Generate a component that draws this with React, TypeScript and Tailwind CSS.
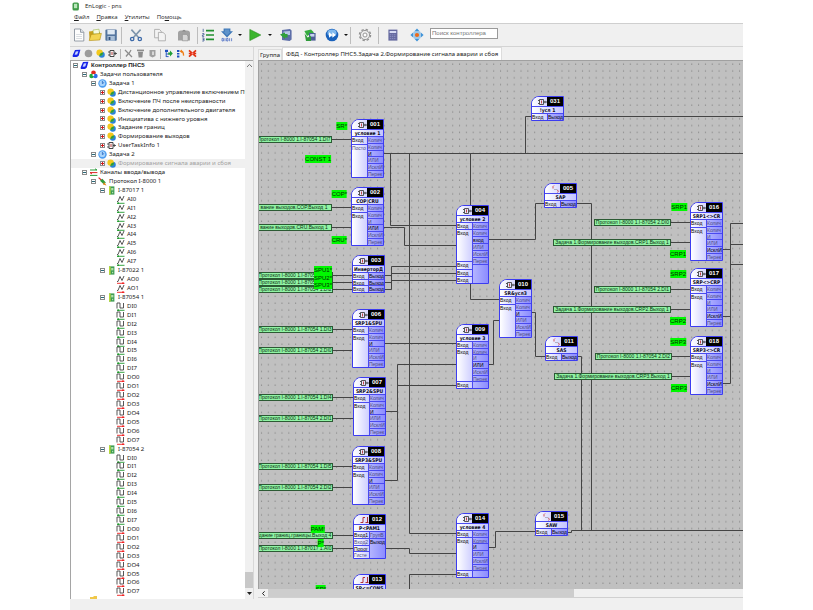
import React, { useState } from "react";

/* ---------- icons ---------- */

type IconName =
  | "controller" | "balls" | "task" | "fbd" | "block" | "channels" | "protocol"
  | "module" | "ai" | "ao" | "di" | "do" | "folder"
  | "grayBall" | "pen" | "trash" | "stack" | "treeAdd" | "treeSort" | "remove";

const zig = "M1 6.5 L2 6.5 L4 1.5 L6 5.5 L8 1";
const square = "M1 6.5 V1 H4 V6 H7.5 V1";

function Icon({ name }: { name: IconName }) {
  const wave = (d: string, color: string, dot: number) => (
    <g fill="none">
      <path d={d} stroke="#444" strokeWidth="0.9" />
      <path d="M1 8.3 H8.5" stroke={color} strokeWidth="0.9" />
      <circle cx={dot} cy="8.2" r="0.9" fill={color} />
    </g>
  );
  return (
    <svg viewBox="0 0 9 9" className="size-[9px] shrink-0" aria-hidden="true">
      {name === "controller" && (
        <g>
          <path d="M3 1 L8.4 0.8 L6.8 6.6 Q6 8 4.5 8 H1 Q0.3 7.5 0.8 6Z" fill="#1724e8" />
          <path d="M3.8 2.4 L6.4 2.3 L5.2 5.6 L2.6 5.8Z" fill="#c9d4ff" />
        </g>
      )}
      {name === "balls" && (
        <g>
          <circle cx="4.5" cy="2.8" r="2.3" fill="#e22a1d" />
          <circle cx="2.6" cy="6" r="2.3" fill="#20a83a" />
          <circle cx="6.4" cy="6" r="2.3" fill="#2b6ee6" />
          <circle cx="4.4" cy="4.9" r="1" fill="#fff" />
        </g>
      )}
      {name === "task" && (
        <g>
          <circle cx="4.5" cy="4.5" r="4.2" fill="#4d9df0" />
          <circle cx="4.3" cy="4.2" r="2.9" fill="#a9d4fb" />
          <path d="M4.4 2 V4.6 L6.2 3.4" stroke="#2464c0" strokeWidth="0.8" fill="none" />
        </g>
      )}
      {name === "fbd" && (
        <g>
          <circle cx="5.8" cy="5.8" r="3" fill="#2b83d8" />
          <circle cx="3.6" cy="3.6" r="3.2" fill="#f3c81d" />
          <path d="M3.4 7 Q3.5 3.6 7 3.4 Q7.4 6.8 3.4 7Z" fill="#2e9e3a" />
        </g>
      )}
      {name === "grayBall" && <circle cx="4.5" cy="4.5" r="3.8" fill="#9b9b9b" />}
      {name === "block" && (
        <g>
          <path d="M2 1.5 H6 V7.5 H2Z" fill="#fff" stroke="#333" strokeWidth="0.9" />
          <path d="M0 3 H2 M0 6 H2 M6 4.5 H9 M7.2 3 V6" stroke="#333" strokeWidth="0.8" />
          <path d="M4 2.8 V6" stroke="#a22" strokeWidth="0.9" fill="none" />
        </g>
      )}
      {name === "channels" && (
        <g fill="none" strokeWidth="1">
          <path d="M1 2 H8" stroke="#2a9a3a" />
          <path d="M1 4.6 H8.4" stroke="#d22" />
          <path d="M1 7.4 H8.4" stroke="#2a9a3a" />
          <path d="M6 0.8 L8 2" stroke="#2a9a3a" />
          <path d="M1 4.6 L3 6" stroke="#d22" />
        </g>
      )}
      {name === "protocol" && (
        <g>
          <path d="M0.6 0.6 L3.6 3.2" stroke="#d22" strokeWidth="1.2" />
          <path d="M2 3.8 L4.4 1.8 L7.8 5.6 L6 7.6Z" fill="#2c9c3c" />
          <path d="M6 5 L8.6 8.4 L5 7.4Z" fill="#e7881c" />
        </g>
      )}
      {name === "module" && (
        <g>
          <rect x="2" y="0.4" width="5.4" height="8.2" fill="#3f9d55" />
          <rect x="2" y="0.4" width="1.6" height="8.2" fill="#b8d83a" />
          <rect x="4.2" y="2" width="2.2" height="2.4" fill="#b5e2ac" />
          <rect x="5" y="5.8" width="1.2" height="1.4" fill="#b5e2ac" />
        </g>
      )}
      {name === "ai" && wave(zig, "#1f9a2c", 2.2)}
      {name === "ao" && wave(zig, "#f01818", 7)}
      {name === "di" && wave(square, "#1f9a2c", 2.2)}
      {name === "do" && wave(square, "#f01818", 7)}
      {name === "folder" && <path d="M1 1 H4 L5 0 H8 V8 H1Z" fill="#f0c84a" />}
      {name === "pen" && (
        <path d="M1 1 L8 8 M7 1 L5 4.5 M2 7.5 L4 5" stroke="#8c8c8c" strokeWidth="1.3" fill="none" />
      )}
      {name === "trash" && (
        <g fill="#8d8d8d">
          <rect x="1" y="0.6" width="7" height="1.6" />
          <path d="M2 2.8 H7 L6.4 8.6 H2.6Z" />
        </g>
      )}
      {name === "stack" && (
        <g>
          <path d="M1.5 1 H7.5 V7 L4.5 8.4 L1.5 7Z" fill="#a0a0a0" />
          <path d="M4 2.6 H6 V6 H4Z" fill="#d8d8d8" />
        </g>
      )}
      {name === "treeAdd" && (
        <g>
          <path d="M1 0.8 H4 V3 H1Z" fill="#1c4fc0" />
          <path d="M2.2 3 V8 M2.2 5 H4.6 M2.2 7.6 H4.6" stroke="#1c4fc0" strokeWidth="0.9" />
          <path d="M4.2 3.6 H6 V1.6 L8.8 4.6 L6 7.6 V5.8 H4.2Z" fill="#1e9d36" />
        </g>
      )}
      {name === "treeSort" && (
        <g>
          <path d="M1 1 H3.4 V3 H1Z M1 4 H3.4 V5.6 H1Z M1 6.6 H3.4 V8.4 H1Z" fill="#1c4fc0" />
          <path d="M4.4 2.2 Q7.4 1.6 7.6 6.6" stroke="#ef7d14" strokeWidth="1.3" fill="none" />
          <path d="M6 0.4 L3.8 2.4 L6.2 4.2Z" fill="#ef7d14" />
        </g>
      )}
      {name === "remove" && (
        <g>
          <path d="M1 1.4 L8 7.6 M8 1.4 L1 7.6 M0.8 4.5 H8.2" stroke="#e0300f" strokeWidth="1.7" />
          <circle cx="4.5" cy="4.5" r="1" fill="#f88" />
        </g>
      )}
    </svg>
  );
}

type ToolName =
  | "new" | "open" | "save" | "cut" | "copy" | "paste" | "list" | "compile"
  | "play" | "load" | "sync" | "forward" | "gear" | "calc" | "locate";

function ToolIcon({ name }: { name: ToolName }) {
  return (
    <svg viewBox="0 0 14 14" className="size-[14px]" aria-hidden="true">
      {name === "new" && (
        <g>
          <path d="M2.5 1 H8.5 L11.8 4.3 V13 H2.5Z" fill="#fdfdfd" stroke="#7d8894" strokeWidth="0.8" />
          <path d="M8.5 1 V4.3 H11.8" fill="#dfe4ea" stroke="#7d8894" strokeWidth="0.8" />
          <path d="M4.2 6.5 H10 M4.2 8.5 H10 M4.2 10.5 H10" stroke="#c9ced4" strokeWidth="0.7" />
        </g>
      )}
      {name === "open" && (
        <g>
          <path d="M1 3.5 L5 3 L6.4 4.6 L12 3.8 V12 H1.6Z" fill="#c8a11d" />
          <path d="M5 2 L11 1.2 L11.6 6 H5.4Z" fill="#f7fbe0" stroke="#8fae37" strokeWidth="0.5" />
          <path d="M3.2 6.4 L13.4 5.4 L11.8 12 L1.2 12.6Z" fill="#f3d552" stroke="#b48e12" strokeWidth="0.6" />
        </g>
      )}
      {name === "save" && (
        <g>
          <rect x="1.4" y="1.4" width="11.4" height="11.4" rx="1" fill="#54759f" />
          <rect x="3.4" y="2" width="7.4" height="4.4" fill="#dfe9f4" />
          <rect x="3.4" y="8" width="7.4" height="4.8" fill="#a9bfd8" />
          <rect x="4.6" y="9" width="1.8" height="3" fill="#33507a" />
        </g>
      )}
      {name === "cut" && (
        <g fill="none">
          <path d="M2.4 1.6 L10 10 M11.6 1.6 L4 10" stroke="#7d94ab" strokeWidth="1.6" />
          <circle cx="3.2" cy="11" r="1.7" stroke="#3c69a8" strokeWidth="1.3" />
          <circle cx="10.8" cy="11" r="1.7" stroke="#3c69a8" strokeWidth="1.3" />
        </g>
      )}
      {name === "copy" && (
        <g fill="#f3f3f3" stroke="#a3a3a3" strokeWidth="0.8">
          <path d="M1.6 1.4 H6.4 L8.2 3.2 V9.8 H1.6Z" />
          <path d="M5.4 4.4 H10 L12.4 6.6 V12.8 H5.4Z" />
        </g>
      )}
      {name === "paste" && (
        <g>
          <path d="M1 5 Q1 2.4 4 2.4 H10 Q13 2.4 13 5 V12.4 H1Z" fill="#a2a2a2" />
          <path d="M5 3.4 Q7 0.2 9 3.4Z" fill="#8a8a8a" />
          <path d="M5.4 6.4 H9.4 L11 8 V12.8 H5.4Z" fill="#d6d6d6" stroke="#8c8c8c" strokeWidth="0.6" />
        </g>
      )}
      {name === "list" && (
        <g fill="none">
          <path d="M5 2.6 H13 M5 7 H13 M5 11.4 H13" stroke="#21902e" strokeWidth="1.6" />
          <path d="M2.2 0.8 V4 M1.2 5.6 H3 V7 H1.4 V8.4 H3.2 M1.2 10 H3 V13 H1.2 M1.6 11.5 H3" stroke="#2d4a8a" strokeWidth="0.7" />
        </g>
      )}
      {name === "compile" && (
        <g>
          <path d="M3.6 0.4 H10.4 V3.2 H13 L7 9.4 L1 3.2 H3.6Z" fill="#3f78b8" />
          <path d="M4.8 1.4 H9.2 V3.8 H10.6 L7 7.4 L3.4 3.8 H4.8Z" fill="#5f93ca" />
          <path d="M2 10.4 H3.4 V13 H2Z M5 10.2 V13.2 M6.6 10.4 H8 V13 H6.6Z M9.6 10.2 V13.2 M11.6 10.2 V13.2" fill="none" stroke="#3a5fc0" strokeWidth="0.7" />
        </g>
      )}
      {name === "play" && <path d="M1.8 1.4 L12.8 7 L1.8 12.6Z" fill="#3cb52e" stroke="#2a8a20" strokeWidth="0.6" />}
      {name === "load" && (
        <g>
          <path d="M3 2 L11 1 L12.6 2.4 V11.4 L10.6 13 L3 12Z" fill="#5d6ea8" />
          <path d="M4.6 3.4 L11 3 V7 H4.6Z" fill="#b6c6e6" />
          <path d="M1 6.4 L6 4.6 V6 H8.6 V9.4 H6 V11Z" fill="#2fa03a" />
        </g>
      )}
      {name === "sync" && (
        <g>
          <path d="M1.4 3 L8 1.6 L11 4.6 L4 8Z" fill="#35ab3f" />
          <rect x="6" y="5" width="6.6" height="7.6" fill="#4d5f96" />
          <rect x="7.2" y="6" width="4.2" height="2.6" fill="#c6d4ee" />
          <path d="M1.6 5.4 L4.6 9.6 L8 8 V13 H3Z" fill="#2f9a3a" />
        </g>
      )}
      {name === "forward" && (
        <g>
          <circle cx="7" cy="7" r="6.3" fill="#1a62bc" />
          <ellipse cx="7" cy="5" rx="4.6" ry="3.4" fill="#7fb8ee" />
          <path d="M4 4.2 L7.4 7 L4 9.8Z M7.4 4.2 L10.8 7 L7.4 9.8Z" fill="#fff" />
        </g>
      )}
      {name === "gear" && (
        <g fill="none" stroke="#8f8f8f">
          <circle cx="7" cy="7" r="5.6" strokeWidth="1.3" strokeDasharray="2.4 2" />
          <circle cx="7" cy="7" r="4.6" strokeWidth="0.9" fill="#ececec" />
          <circle cx="7" cy="7" r="2" strokeWidth="0.9" fill="#fff" />
        </g>
      )}
      {name === "calc" && (
        <g>
          <rect x="2.4" y="1.6" width="9" height="11" fill="#666aa0" />
          <rect x="3.6" y="3" width="6.6" height="2" fill="#d7dbf3" />
          <path d="M3.8 6.8 H10.2 M3.8 8.6 H10.2 M3.8 10.6 H10.2" stroke="#8f93c4" strokeWidth="0.9" strokeDasharray="1.4 0.7" />
        </g>
      )}
      {name === "locate" && (
        <g>
          <path d="M7 0.4 L9.8 3.4 H4.2Z M7 13.6 L9.8 10.6 H4.2Z M0.4 7 L3.4 4.2 V9.8Z M13.6 7 L10.6 4.2 V9.8Z" fill="#3f93d8" />
          <rect x="3.6" y="3.6" width="6.8" height="6.8" fill="#9dc9ea" />
          <circle cx="7" cy="7" r="2.1" fill="#ee6a18" />
        </g>
      )}
    </svg>
  );
}

/* ---------- tool bars ---------- */

function ToolButton({ name, label, width }: { name: ToolName; label: string; width: string }) {
  return (
    <button type="button" aria-label={label} className={`flex shrink-0 items-center justify-center ${width}`}>
      <ToolIcon name={name} />
    </button>
  );
}

function Caret({ label }: { label: string }) {
  return (
    <button type="button" aria-label={label} className="flex w-2 shrink-0 items-center justify-center">
      <svg viewBox="0 0 4 2" className="h-[2px] w-1" aria-hidden="true">
        <path d="M0 0 H4 L2 2Z" fill="#111" />
      </svg>
    </button>
  );
}

function Separator() {
  return <span className="h-[17px] w-px shrink-0 bg-[#bdbdbd]" />;
}

function MainToolbar() {
  return (
    <div className="flex h-6 shrink-0 items-center border-t border-b border-t-[#cfcfcf] border-b-[#d4d4d4] bg-[#f0f0f0] pl-px">
      <ToolButton name="new" label="Создать" width="w-4" />
      <ToolButton name="open" label="Открыть" width="w-4" />
      <ToolButton name="save" label="Сохранить" width="w-4" />
      <span className="w-[2px]" />
      <Separator />
      <ToolButton name="cut" label="Вырезать" width="w-[27px]" />
      <ToolButton name="copy" label="Копировать" width="w-[22px]" />
      <ToolButton name="paste" label="Вставить" width="w-[26px]" />
      <Separator />
      <ToolButton name="list" label="Порядок" width="w-5" />
      <ToolButton name="compile" label="Компиляция" width="w-[18px]" />
      <Caret label="Варианты компиляции" />
      <ToolButton name="play" label="Пуск" width="w-[22px]" />
      <Caret label="Варианты пуска" />
      <ToolButton name="load" label="Загрузить" width="w-6" />
      <ToolButton name="sync" label="Обновить" width="w-6" />
      <ToolButton name="forward" label="Вперёд" width="w-5" />
      <Caret label="Варианты" />
      <Separator />
      <ToolButton name="gear" label="Настройки" width="w-[27px]" />
      <Separator />
      <ToolButton name="calc" label="Калькулятор" width="w-[27px]" />
      <ToolButton name="locate" label="Найти" width="w-[22px]" />
      <input
        type="text"
        aria-label="Поиск контроллера"
        placeholder="Поиск контроллера"
        className="mb-1 ml-[2px] h-[11px] w-[68px] rounded-none border border-[#9a9a9a] bg-white px-px text-[6px] leading-[9px] text-[#222] outline-none placeholder:text-[#777]"
      />
    </div>
  );
}

const sideTools: { icon: IconName; label: string }[][] = [
  [
    { icon: "controller", label: "Контроллер" },
    { icon: "grayBall", label: "Задача" },
    { icon: "fbd", label: "ФБД" },
    { icon: "block", label: "Блок" },
  ],
  [
    { icon: "pen", label: "Изменить" },
    { icon: "trash", label: "Удалить" },
    { icon: "stack", label: "Архив" },
  ],
  [
    { icon: "treeAdd", label: "Развернуть" },
    { icon: "treeSort", label: "Упорядочить" },
    { icon: "remove", label: "Убрать" },
  ],
];

function SideToolbar() {
  return (
    <div className="flex h-[13px] shrink-0 items-center gap-[2px]">
      {sideTools.map((group, i) => (
        <div key={i} className="flex items-center">
          {i > 0 && <span className="mr-px h-[10px] w-px bg-[#b5b5b5]" />}
          {group.map((tool) => (
            <button key={tool.label} type="button" aria-label={tool.label} className="flex w-3 justify-center">
              <Icon name={tool.icon} />
            </button>
          ))}
        </div>
      ))}
    </div>
  );
}

/* ---------- project tree ---------- */

type Row = { level: number; icon: IconName; text: string; box?: "+" | "-"; bold?: boolean; selected?: boolean };

const series = (prefix: string, count: number, icon: IconName): Row[] =>
  Array.from({ length: count }, (_, i) => ({ level: 4, icon, text: prefix + i }));

const rows: Row[] = [
  { level: 0, icon: "controller", text: "Контроллер ПНС5", box: "-", bold: true },
  { level: 1, icon: "balls", text: "Задачи пользователя", box: "-" },
  { level: 2, icon: "task", text: "Задача 1", box: "-" },
  { level: 3, icon: "fbd", text: "Дистанционное управление включением ПЧ", box: "+" },
  { level: 3, icon: "fbd", text: "Включение ПЧ после неисправности", box: "+" },
  { level: 3, icon: "fbd", text: "Включение дополнительного двигателя", box: "+" },
  { level: 3, icon: "fbd", text: "Инициатива с нижнего уровня", box: "+" },
  { level: 3, icon: "fbd", text: "Задание границ", box: "+" },
  { level: 3, icon: "fbd", text: "Формирование выходов", box: "+" },
  { level: 3, icon: "block", text: "UserTaskInfo 1", box: "+" },
  { level: 2, icon: "task", text: "Задача 2", box: "-" },
  { level: 3, icon: "fbd", text: "Формирование сигнала аварии и сбоя", box: "+", selected: true },
  { level: 1, icon: "channels", text: "Каналы ввода/вывода", box: "-" },
  { level: 2, icon: "protocol", text: "Протокол I-8000 1", box: "-" },
  { level: 3, icon: "module", text: "I-87017 1", box: "-" },
  ...series("AI", 8, "ai"),
  { level: 3, icon: "module", text: "I-87022 1", box: "-" },
  ...series("AO", 2, "ao"),
  { level: 3, icon: "module", text: "I-87054 1", box: "-" },
  ...series("DI", 8, "di"),
  ...series("DO", 8, "do"),
  { level: 3, icon: "module", text: "I-87054 2", box: "-" },
  ...series("DI", 8, "di"),
  ...series("DO", 8, "do"),
];

const indent = ["pl-0", "pl-[9px]", "pl-[18px]", "pl-[27px]", "pl-9"];

function Expander({ kind }: { kind?: "+" | "-" }) {
  return (
    <span className="flex w-[9px] shrink-0 items-center justify-center">
      {kind && (
        <svg viewBox="0 0 5 5" className="size-[5px]" aria-hidden="true">
          <rect x="0.5" y="0.5" width="4" height="4" fill="#fff" stroke="#8b8b8b" strokeWidth="1" />
          <path d="M1 2.5 H4" stroke={kind === "+" ? "#d21c1c" : "#2a6a7a"} strokeWidth="1" />
          {kind === "+" && <path d="M2.5 1 V4" stroke="#d21c1c" strokeWidth="1" />}
        </svg>
      )}
    </span>
  );
}

function Tree() {
  return (
    <div className="flex min-h-0 flex-1 border-t border-l border-[#a5a5a5] bg-white">
      <ul className="flex min-w-0 flex-1 flex-col overflow-hidden">
        {rows.map((row, i) => (
          <li
            key={i}
            className={`flex min-h-0 flex-1 items-center ${indent[row.level]} ${row.selected ? "bg-[#f0f0f0] text-[#a2a2a2]" : "text-[#1c1c1c]"}`}
          >
            <Expander kind={row.box} />
            <Icon name={row.icon} />
            <span
              className={`ml-[2px] whitespace-nowrap ${row.bold ? "font-['Liberation_Sans',Arial,sans-serif] font-bold" : "font-['Noto_Sans',sans-serif]"}`}
            >
              {row.text}
            </span>
          </li>
        ))}
        <li className="flex h-[3px] shrink-0 items-start overflow-hidden pl-[18px]">
          <Icon name="folder" />
        </li>
      </ul>
      <div className="flex w-2 shrink-0 flex-col items-center bg-[#f0f0f0]">
        <svg viewBox="0 0 5 3" className="mt-[3px] h-[3px] w-[5px]" aria-hidden="true">
          <path d="M0 3 L2.5 0.4 L5 3" fill="none" stroke="#777" />
        </svg>
        <span className="flex-1" />
        <span className="h-4 w-full bg-[#c8c8c8]" />
        <svg viewBox="0 0 5 3" className="my-1 h-[3px] w-[5px]" aria-hidden="true">
          <path d="M0 0 H5 L2.5 3Z" fill="#222" />
        </svg>
      </div>
    </div>
  );
}

/* ---------- diagram ---------- */

// Sheet coordinate shown at the top left corner of the view.
const VIEW = { x: 259, y: 61 };

type Kind = "logic" | "compare" | "delay";
type Cell = { text: string; span?: number; dim?: boolean };
type Block = { id: string; title: string; x: number; y: number; h: number; kind: Kind; left: Cell[]; right: Cell[] };

const ops = ["Колич", "Колич", "И", "ИЛИ", "ИсклИ", "Перек"];
const logicRight = (active: number, extra = 0, label?: string): Cell[] => [
  ...ops.map((text, i) => ({ text: i === active && label ? label : text, dim: i !== active })),
  ...(extra ? [{ text: "", span: extra }] : []),
];
const logicLeft = (extra = 0): Cell[] => [
  { text: "Вход" },
  { text: "Вход", span: 5 },
  ...Array.from({ length: extra }, () => ({ text: "Вход" })),
];
const logic = (id: string, title: string, x: number, y: number, active: number, extra = 0, label?: string): Block => ({
  id, title, x, y, h: [59, 65, 72, 79][extra], kind: "logic",
  left: logicLeft(extra), right: logicRight(active, extra, label),
});
const single = (id: string, title: string, x: number, y: number, kind: Kind): Block => ({
  id, title, x, y, h: 25, kind, left: [{ text: "Вход" }], right: [{ text: "Выход" }],
});

const blocks: Block[] = [
  { ...logic("001", "условие 1", 351, 119, 2), left: [{ text: "Вход" }, { text: "Посто", span: 5, dim: true }] },
  logic("002", "COP|CRU", 351, 187, 3),
  {
    id: "003", title: "ИнверторД", x: 352, y: 255, h: 38, kind: "logic",
    left: [{ text: "Вход" }, { text: "Вход" }, { text: "Вход" }],
    right: [{ text: "Выход" }, { text: "Выход" }, { text: "Выход" }],
  },
  logic("006", "SRP1&SPU", 352, 309, 2),
  logic("007", "SRP2&SPU", 353, 377, 2),
  logic("008", "SRP3&SPU", 352, 446, 2),
  {
    id: "012", title: "P<PAM1", x: 353, y: 514, h: 45, kind: "compare",
    left: [{ text: "Вход1" }, { text: "Вход2", dim: true }, { text: "Порог" }, { text: "Гисте", dim: true }],
    right: [{ text: "ГрупВ", dim: true }, { text: "Выход", span: 3 }],
  },
  single("013", "SP<=CONS", 353, 574, "compare"),
  single("031", "!усл 1", 531, 96, "logic"),
  logic("004", "условие 2", 456, 205, 2, 3, "вход"),
  single("005", "SAP", 544, 183, "delay"),
  logic("009", "условие 3", 456, 324, 3, 1),
  logic("010", "SR&усл3", 499, 279, 2),
  single("011", "SAS", 545, 336, "delay"),
  logic("014", "условие 4", 456, 513, 2, 1),
  single("015", "SAW", 535, 511, "delay"),
  logic("016", "SRP1<>CR", 690, 202, 4),
  logic("017", "SRP<>CRP", 690, 268, 4),
  logic("018", "SRP3<>CR", 690, 336, 4),
];

const wires = [
  "M383 153.5 H743", "M390.5 153 V225.5 H456", "M409.5 153 V533.5 H456",
  "M383 227.5 H404.5 V245.5 H456",
  "M385 275.5 H391.5 M385 282.5 H391.5 M385 289.5 H391.5 V266.5 H456 M391 273.5 H456 M391 280.5 H456",
  "M385 343.5 H456", "M385 411.5 H397.5 M385 480.5 H397.5 V364.5 H456 M397 385.5 H456",
  "M385 548.5 H409.5 V553.5 H456", "M409.5 590 V574.5 H456",
  "M470.5 153 V205 M470.5 284 V299.5 H499",
  "M488 239.5 H535.5 V203.5 H544", "M525.5 153 V116.5 H531 M563 116.5 H743",
  "M576 203.5 H591.5 V531", "M488 364.5 H493.5 V320.5 H499",
  "M531 312.5 H535.5 V356.5 H545", "M578 356.5 H581.5 V531",
  "M488 547.5 H495.5 V531.5 H535", "M568 532.5 H571.5 V530.5 H743",
  "M722 249.5 H730.5 M722 316.5 H730.5 M722 383.5 H730.5 V223.5 H743 M730 244.5 H743 M730 264.5 H743",
  "M332 139.5 H351 M332 207.5 H351 M332 227.5 H351",
  "M332 275.5 H352 M332 282.5 H352 M332 289.5 H352",
  "M332 329.5 H353 M332 350.5 H353 M332 397.5 H353 M332 418.5 H353",
  "M332 466.5 H353 M332 487.5 H353 M332 535.5 H353 M332 548.5 H353",
  "M670 222.5 H690 M670 242.5 H690 M670 289.5 H690 M670 309.5 H690 M671 356.5 H690 M671 376.5 H690",
];

const proto = "Протокол I-8000 1.";
const form = "Задача 1.Формирование выходов.";
const sources: { text: string; right: number; y: number; w: number }[] = [
  { text: proto + "I-87054 1.DI7", right: 332, y: 139, w: 76 },
  { text: "вание выходов.COP.Выход 1", right: 332, y: 207, w: 76 },
  { text: "вание выходов.CRU.Выход 1", right: 332, y: 227, w: 76 },
  { text: proto + "I-87054 1.DI0", right: 333, y: 275, w: 76 },
  { text: proto + "I-87054 1.DI1", right: 333, y: 282, w: 76 },
  { text: proto + "I-87054 1.DI2", right: 333, y: 289, w: 76 },
  { text: proto + "I-87054 1.DI3", right: 333, y: 329, w: 76 },
  { text: proto + "I-87054 2.DI0", right: 333, y: 350, w: 76 },
  { text: proto + "I-87054 1.DI4", right: 333, y: 397, w: 76 },
  { text: proto + "I-87054 2.DI1", right: 333, y: 418, w: 76 },
  { text: proto + "I-87054 1.DI5", right: 333, y: 466, w: 76 },
  { text: proto + "I-87054 2.DI2", right: 333, y: 487, w: 76 },
  { text: "дание границ.границы.Выход 4", right: 333, y: 535, w: 76 },
  { text: proto + "I-87017 1.AI0", right: 333, y: 548, w: 76 },
  { text: proto + "I-87054 2.DI0", right: 671, y: 222, w: 77 },
  { text: form + "CRP1.Выход 1", right: 671, y: 242, w: 118 },
  { text: proto + "I-87054 2.DI1", right: 671, y: 289, w: 77 },
  { text: form + "CRP2.Выход 1", right: 671, y: 309, w: 118 },
  { text: proto + "I-87054 2.DI2", right: 672, y: 356, w: 77 },
  { text: form + "CRP3.Выход 1", right: 672, y: 376, w: 118 },
];

const tags: { text: string; right: number; y: number }[] = [
  { text: "SR*", right: 347, y: 122 }, { text: "CONST 1", right: 331, y: 155 },
  { text: "COP*", right: 347, y: 190 }, { text: "CRU*", right: 347, y: 236 },
  { text: "SPU1*", right: 332, y: 266 }, { text: "SPU2*", right: 332, y: 274 },
  { text: "SPU3*", right: 332, y: 281 }, { text: "PAM!", right: 325, y: 525 },
  { text: "P*", right: 324, y: 539 }, { text: "SP*", right: 326, y: 585 },
  { text: "SRP1", right: 687, y: 203 }, { text: "CRP1", right: 686, y: 250 },
  { text: "SRP2", right: 686, y: 270 }, { text: "CRP2", right: 686, y: 317 },
  { text: "SRP3", right: 686, y: 338 }, { text: "CRP3", right: 687, y: 384 },
];

function KindMark({ kind }: { kind: Kind }) {
  return (
    <svg viewBox="0 0 9 8" className="h-2 w-[9px]" aria-hidden="true">
      {kind === "logic" && (
        <g fill="none" strokeWidth="0.9">
          <path d="M1.5 1.5 H5.5 V6.5 H1.5Z M0 2.5 H1.5 M0 5.5 H1.5 M5.5 4 H9" stroke="#444" />
          <path d="M7 2.8 V5.2" stroke="#444" />
          <path d="M3.5 2.5 V5.5" stroke="#b33" />
        </g>
      )}
      {kind === "compare" && (
        <path d="M0.5 6.5 H3 V1.5 H5 M5.5 6.5 H8.5 M7.5 1 V6.5" fill="none" stroke="#b02020" strokeWidth="0.9" />
      )}
      {kind === "delay" && (
        <g fill="none" strokeWidth="0.9">
          <path d="M3 0.5 Q1.5 1 2 3.5 M6.5 5 Q8 6.5 6.5 7.5" stroke="#c44" />
          <path d="M3 4.5 H6.5" stroke="#aab" />
        </g>
      )}
    </svg>
  );
}

function Column({ cells, tone }: { cells: Cell[]; tone: "light" | "dark" }) {
  return (
    <div
      className={`flex min-w-0 flex-col ${tone === "light" ? "flex-1 bg-linear-to-r from-white to-[#cfcfff]" : "w-4 border-l border-[#4a4af0] bg-linear-to-r from-[#b4b4ff] to-[#8c8cff]"}`}
    >
      {cells.map((cell, i) => (
        <div
          key={i}
          style={{ flexGrow: cell.span ?? 1 }}
          className={`min-h-0 basis-0 overflow-hidden border-t border-[#4a4af0] leading-[6px] whitespace-nowrap ${cell.dim ? "text-[#4c4c80]" : "text-black"}`}
        >
          {cell.text}
        </div>
      ))}
    </div>
  );
}

function BlockView({ block }: { block: Block }) {
  return (
    <div
      style={{ left: block.x - VIEW.x, top: block.y - VIEW.y, height: block.h }}
      className="absolute flex w-[33px] flex-col overflow-hidden rounded-tl-[8px] border border-[#3c3cf0] bg-white text-[5px]"
    >
      <div className="flex h-[9px] shrink-0">
        <span className="flex flex-1 items-center justify-end bg-linear-to-r from-white to-[#d8d8ff]">
          <KindMark kind={block.kind} />
        </span>
        <span className="w-4 bg-black text-center text-[6px] leading-[9px] font-bold text-white">{block.id}</span>
      </div>
      <div className="flex h-[7px] shrink-0 justify-center border-t border-[#4a4af0] bg-linear-to-r from-white to-[#c4c4ff] font-['DejaVu_Sans_Condensed','DejaVu_Sans',sans-serif] leading-[6px] font-bold whitespace-nowrap text-[#0a0a20]">
        {block.title}
      </div>
      <div className="flex min-h-0 flex-1">
        <Column cells={block.left} tone="light" />
        <Column cells={block.right} tone="dark" />
      </div>
    </div>
  );
}

function Diagram() {
  return (
    <div className="relative min-h-0 flex-1 overflow-hidden border-t border-l border-[#a0a0a0] bg-[#c0c0c0]">
      <svg className="absolute inset-0 size-full" aria-hidden="true">
        <defs>
          <pattern id="dots" width="6.83" height="6.83" patternUnits="userSpaceOnUse">
            <rect x="2" y="2.6" width="1" height="1" fill="#747474" />
          </pattern>
        </defs>
        <rect width="100%" height="100%" fill="url(#dots)" />
        <g transform={`translate(${-VIEW.x} ${-VIEW.y})`} fill="none" stroke="#444" strokeWidth="1">
          {wires.map((d) => (
            <path key={d} d={d} />
          ))}
        </g>
      </svg>
      {sources.map((s, i) => (
        <div
          key={i}
          style={{ left: s.right - s.w - VIEW.x, top: s.y - 3 - VIEW.y, width: s.w }}
          className="absolute flex h-[7px] items-center justify-center border border-[#2c5a34] bg-[#90f4a4] text-[5px] leading-[5px] whitespace-nowrap text-[#0c2c12]"
        >
          {s.text}
        </div>
      ))}
      {tags.map((t) => (
        <div
          key={t.text}
          style={{ left: t.right - VIEW.x, top: t.y - VIEW.y }}
          className="absolute -translate-x-full bg-[#00f800] text-[6px] leading-[8px] whitespace-nowrap text-[#032b03]"
        >
          {t.text}
        </div>
      ))}
      {blocks.map((b) => (
        <BlockView key={b.id} block={b} />
      ))}
    </div>
  );
}

/* ---------- window ---------- */

const menus = [
  ["", "Ф", "айл"],
  ["", "П", "равка"],
  ["", "У", "тилиты"],
  ["По", "м", "ощь"],
];

export default function App() {
  const [tab, setTab] = useState(1);
  const tabs = ["Группа", "ФБД - Контроллер ПНС5.Задача 2.Формирование сигнала аварии и сбоя"];
  return (
    <div className="h-screen bg-white px-[70px] font-['Liberation_Sans',Arial,sans-serif] text-[6px] leading-[9px] text-[#1c1c1c]">
      <div className="flex h-full flex-col overflow-hidden bg-[#f0f0f0]">
        <header className="flex h-3 shrink-0 items-center gap-[5px] bg-white pl-[2px] font-['Open_Sans',sans-serif] text-[6px]">
          <svg viewBox="0 0 8 9" className="h-[9px] w-2" aria-hidden="true">
            <rect x="0.5" y="0.5" width="6.4" height="8" rx="1.6" fill="#3f9a48" />
            <rect x="2" y="1.8" width="3.2" height="4.4" fill="#b9e6bb" />
          </svg>
          <h1>EnLogic - pns</h1>
        </header>
        <nav className="flex h-[11px] shrink-0 items-center gap-[7px] bg-white pl-1 font-['Open_Sans',sans-serif] text-[6px]">
          {menus.map(([before, key, after]) => (
            <button key={after} type="button">
              {before}
              <u>{key}</u>
              {after}
            </button>
          ))}
        </nav>
        <MainToolbar />
        <div className="flex min-h-0 flex-1">
          <aside className="flex w-[183px] shrink-0 flex-col">
            <SideToolbar />
            <Tree />
          </aside>
          <div className="flex w-[5px] shrink-0 border-l border-[#d8d8d8]" />
          <main className="flex min-w-0 flex-1 flex-col">
            <div role="tablist" className="flex h-[13px] shrink-0 items-end font-['Noto_Sans',sans-serif]">
              {tabs.map((name, i) => (
                <button
                  key={name}
                  type="button"
                  role="tab"
                  aria-selected={tab === i}
                  onClick={() => setTab(i)}
                  className={`border-x border-t border-[#dcdcdc] whitespace-nowrap ${tab === i ? "h-[13px] bg-white px-[3px]" : "h-[11px] bg-[#f4f4f4] px-px"}`}
                >
                  {name}
                </button>
              ))}
            </div>
            <Diagram />
            <div className="mb-px flex h-[9px] shrink-0 items-stretch border-b border-[#d0d0d0]">
              <span className="flex w-[10px] items-center justify-center">
                <svg viewBox="0 0 3 5" className="h-[5px] w-[3px]" aria-hidden="true">
                  <path d="M2.6 0.3 L0.5 2.5 L2.6 4.7" fill="none" stroke="#222" />
                </svg>
              </span>
              <span className="w-[63%] bg-[#cdcdcd]" />
            </div>
          </main>
        </div>
        <footer className="h-[11px] shrink-0 bg-[#f0f0f0]" />
      </div>
    </div>
  );
}
